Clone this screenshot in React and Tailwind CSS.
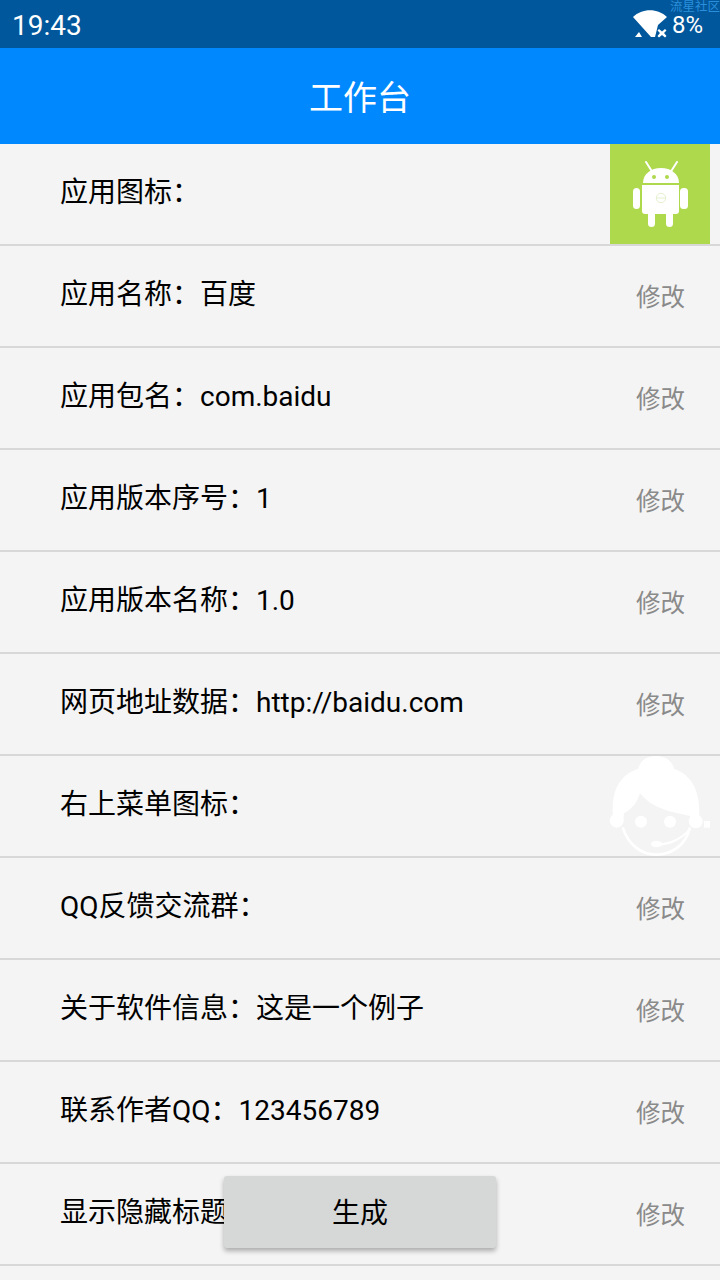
const rows = [
  { label: "应用名称：百度" },
  { label: "应用包名：com.baidu" },
  { label: "应用版本序号：1" },
  { label: "应用版本名称：1.0" },
  { label: "网页地址数据：http://baidu.com" },
  { label: "右上菜单图标：", icon: true },
  { label: "QQ反馈交流群：" },
  { label: "关于软件信息：这是一个例子" },
  { label: "联系作者QQ：123456789" },
  { label: "显示隐藏标题" },
];

function WifiIcon() {
  return (
    <svg width="40" height="35" viewBox="0 0 40 35" fill="#fff">
      <path d="M3 12 C 12 3, 28 3, 37 12 L 28 20 L 25 32 L 21 32 Z" />
      <path d="M5 32 L 9 27 L 12 32 Z" />
      <path d="M29 24 L32 26.5 L35 24 L36.5 25.5 L34 28 L36.5 31 L35 32.5 L32 30 L29 32.5 L27.5 31 L30 28 L27.5 25.5 Z" />
    </svg>
  );
}

function AndroidIcon() {
  return (
    <svg width="55" height="66" viewBox="0 0 55 66" fill="#fff">
      <path d="M13 1 L20 12" stroke="#fff" strokeWidth="2" strokeLinecap="round" />
      <path d="M44 1 L37 12" stroke="#fff" strokeWidth="2" strokeLinecap="round" />
      <path d="M10 22 C 10 13, 18 7, 28 7 C 38 7, 46 13, 46 22 Z" />
      <circle cx="21" cy="16" r="2" fill="#aed94c" />
      <circle cx="34" cy="16" r="2" fill="#aed94c" />
      <path d="M9 24 H46 V50 Q46 53 43 53 H12 Q9 53 9 50 Z" />
      <rect x="0" y="27" width="7" height="21" rx="3.5" />
      <rect x="47" y="27" width="8" height="21" rx="3.5" />
      <rect x="15" y="50" width="7" height="16" rx="3.5" />
      <rect x="33" y="50" width="7" height="16" rx="3.5" />
      <circle cx="28" cy="37" r="4.7" fill="none" stroke="#d9e9b8" strokeWidth="0.7" />
      <path d="M23.5 37 H32.5" stroke="#d9e9b8" strokeWidth="0.7" />
    </svg>
  );
}

function AgentIcon() {
  return (
    <svg width="120" height="110" viewBox="0 0 360 330" fill="#fff">
      <path d="M38 178 C 38 112, 65 72, 115 56 C 120 32, 140 18, 168 18 C 196 18, 216 32, 222 56 C 270 74, 298 112, 298 188 L 298 212 L 270 212 L 270 198 C 220 186, 160 180, 120 130 C 110 160, 95 178, 72 190 L 70 212 L 38 212 Z" />
      <circle cx="50" cy="212" r="21" />
      <circle cx="287" cy="214" r="21" />
      <circle cx="123" cy="215" r="18" />
      <circle cx="210" cy="215" r="18" />
      <path d="M68 232 C 85 285, 125 314, 168 314 C 215 314, 258 285, 270 232" fill="none" stroke="#fff" strokeWidth="8" />
      <path d="M175 284 C 215 282, 250 262, 268 238" fill="none" stroke="#fff" strokeWidth="6" />
      <ellipse cx="170" cy="282" rx="17" ry="10" />
      <rect x="312" y="213" width="18" height="20" />
    </svg>
  );
}

function Row({ label, icon }) {
  return (
    <div className="relative flex h-[102px] items-center justify-between border-b-2 border-[#d8d8d8] pl-[60px] pr-[35px]">
      <span className="-mt-[2px] text-[28px] text-black">{label}</span>
      {icon ? (
        <span className="absolute top-[-6px] right-0">
          <AgentIcon />
        </span>
      ) : (
        <span className="mt-[4px] text-[24.5px] text-[#8a8a8a]">修改</span>
      )}
    </div>
  );
}

export default function App() {
  return (
    <div className="relative h-[1280px] w-[720px] overflow-hidden bg-[#f4f4f4] font-['Roboto','Noto_Sans_CJK_SC',sans-serif]">
      <div className="relative flex h-[48px] items-center justify-between bg-[#01579b] pl-[12px] pr-[17px] text-white">
        <span className="pt-[4px] text-[28px]">19:43</span>
        <div className="flex items-center">
          <span className="-mt-[4px] ml-[1px]">
            <WifiIcon />
          </span>
          <span className="pt-[2px] pl-[2px] text-[24px]">8%</span>
        </div>
        <span className="absolute top-0 right-0 text-[12.5px] leading-[13px] text-[#2a8fdc]">流星社区</span>
      </div>
      <div className="flex h-[96px] items-center justify-center bg-[#0088ff] pt-[4px]">
        <span className="text-[34px] text-white">工作台</span>
      </div>
      <div className="relative flex h-[102px] items-center border-b-2 border-[#d8d8d8] pl-[60px]">
        <span className="-mt-[2px] text-[28px] text-black">应用图标：</span>
        <div className="absolute top-0 right-[10px] flex h-[100px] w-[100px] items-center justify-center bg-[#aed94c]">
          <AndroidIcon />
        </div>
      </div>
      {rows.map((r) => (
        <Row key={r.label} label={r.label} icon={r.icon} />
      ))}
      <button className="absolute top-[1176px] left-[224px] flex h-[72px] w-[272px] items-center justify-center rounded-[3px] bg-[#d6d7d7] pt-[4px] text-[28px] text-black shadow-[0_3px_5px_rgba(0,0,0,0.3)]">
        生成
      </button>
    </div>
  );
}
